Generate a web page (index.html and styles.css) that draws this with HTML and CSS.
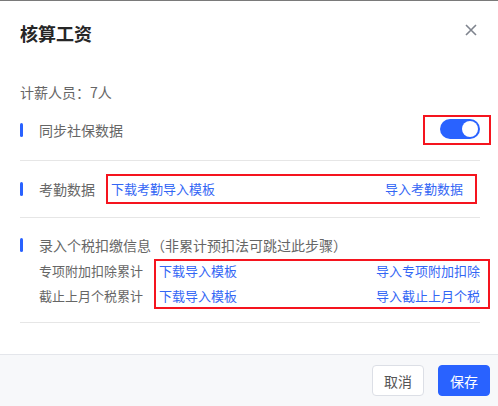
FILE: index.html
```html
<!DOCTYPE html>
<html lang="zh">
<head>
<meta charset="utf-8">
<link rel="stylesheet" href="styles.css">
</head>
<body>
<div class="modal">
  <div class="header">
    <div class="title">核算工资</div>
    <svg class="close" width="12" height="12" viewBox="0 0 12 12"><path d="M1 1L11 11M11 1L1 11" stroke="#7f848e" stroke-width="1.6" fill="none"/></svg>
  </div>
  <div class="body">
    <div class="count">计薪人员<span class="punct">：</span>7人</div>
    <div class="section">
      <div class="row">
        <div class="label"><span class="bar"></span>同步社保数据</div>
        <div class="mark toggle-box"><span class="toggle"><span class="knob"></span></span></div>
      </div>
    </div>
    <div class="section s2">
      <div class="row">
        <div class="label"><span class="bar"></span>考勤数据</div>
        <div class="mark att-box"><a class="link">下载考勤导入模板</a><a class="link">导入考勤数据</a></div>
      </div>
    </div>
    <div class="section s3">
      <div class="label"><span class="bar"></span>录入个税扣缴信息<span class="punct">（</span>非累计预扣法可跳过此步骤<span class="punct">）</span></div>
      <div class="tax">
        <div class="sub-labels">
          <div class="sub">专项附加扣除累计</div>
          <div class="sub">截止上月个税累计</div>
        </div>
        <div class="mark tax-box">
          <div class="sub links"><a class="link">下载导入模板</a><a class="link">导入专项附加扣除</a></div>
          <div class="sub links"><a class="link">下载导入模板</a><a class="link">导入截止上月个税</a></div>
        </div>
      </div>
    </div>
  </div>
  <div class="footer">
    <button class="btn cancel">取消</button>
    <button class="btn save">保存</button>
  </div>
</div>
</body>
</html>
```
FILE: styles.css
```css
* { box-sizing: border-box; }
html, body { margin: 0; padding: 0; background: #fff; }
body {
  font-family: "Noto Sans CJK SC", "Noto Sans", sans-serif;
  width: 498px;
  height: 406px;
  overflow: hidden;
}
.modal {
  border-top: 1px solid #7a7a7a;
  height: 406px;
  display: flex;
  flex-direction: column;
}
.header {
  display: flex;
  justify-content: space-between;
  padding: 20px 21px 0 20px;
}
.title {
  font-size: 18px;
  line-height: 24px;
  font-weight: 700;
  color: #262626;
}
.close { margin-top: 3px; }
.body {
  padding: 0 18px 0 20px;
  flex: 1;
}
.count {
  margin-top: 37px;
  font-size: 14px;
  line-height: 20px;
  color: #666;
}
.punct {
  font-family: "Noto Sans CJK TC", "Noto Sans CJK SC", sans-serif;
}
.section {
  border-bottom: 1px solid #e6e6e6;
  padding: 13px 0 15px;
}
.s2 { padding: 13px 0 13px; }
.s3 { padding: 17px 0 13px; }
.row {
  display: flex;
  align-items: center;
  height: 30px;
}
.label {
  display: flex;
  align-items: center;
  font-size: 14px;
  line-height: 20px;
  color: #666;
  white-space: nowrap;
}
.bar {
  width: 3px;
  height: 14px;
  border-radius: 2px;
  background: #2962ff;
  margin-right: 16px;
}
.mark { border: 2px solid #f5141e; }
.toggle-box {
  margin-left: auto;
  margin-right: -11px;
  height: 30px;
  padding: 2px 9px 0 15px;
}
.toggle {
  display: flex;
  justify-content: flex-end;
  align-items: center;
  width: 40px;
  height: 20px;
  border-radius: 10px;
  background: #2962ff;
  padding: 0 2px;
}
.knob {
  width: 16px;
  height: 16px;
  border-radius: 50%;
  background: #fff;
}
.att-box {
  margin-left: 11px;
  margin-right: 3px;
  flex: 1;
  height: 30px;
  display: flex;
  justify-content: space-between;
  align-items: center;
  padding: 0 12px 0 3px;
}
.link {
  font-size: 13px;
  line-height: 20px;
  color: #3366f5;
  white-space: nowrap;
}
.tax {
  display: flex;
  margin-top: 4px;
}
.sub-labels, .tax-box {
  display: flex;
  flex-direction: column;
  gap: 5px;
  padding: 0 0 1px;
}
.sub-labels { padding-top: 2px; padding-left: 19px; }
.sub {
  font-size: 13px;
  line-height: 20px;
  color: #666;
  white-space: nowrap;
}
.tax-box {
  flex: 1;
  margin-left: 11px;
  margin-right: -10px;
  padding: 0 8px 1px 3px;
}
.links {
  display: flex;
  justify-content: space-between;
}
.footer {
  height: 52px;
  border-top: 1px solid #e4e6eb;
  background: #f7f8fa;
  display: flex;
  justify-content: flex-end;
  align-items: flex-start;
  gap: 14px;
  padding: 10px 8px 0 0;
}
.btn {
  width: 52px;
  height: 31px;
  border-radius: 4px;
  font-family: "Noto Sans CJK SC", "Noto Sans", sans-serif;
  font-size: 14px;
  line-height: 20px;
  padding: 0;
}
.cancel {
  background: #fff;
  border: 1px solid #dcdfe6;
  color: #555;
}
.save {
  background: #2962ff;
  border: 1px solid #2962ff;
  color: #fff;
}
```
